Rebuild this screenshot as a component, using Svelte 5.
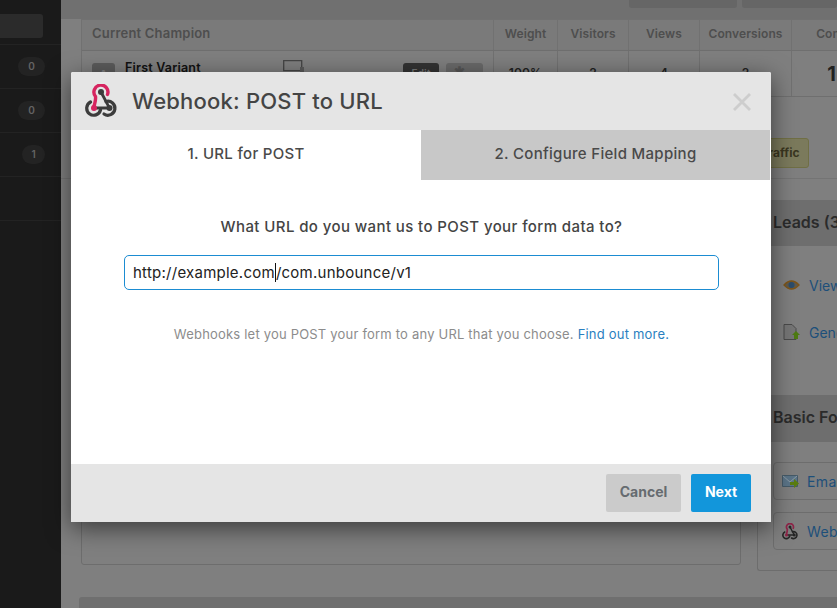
<script>
	const sideRows = [{ n: 0 }, { n: 0 }, { n: 1 }];
	const columns = [
		{ label: 'Weight', w: 64, value: '100%' },
		{ label: 'Visitors', w: 71, value: '2' },
		{ label: 'Views', w: 71, value: '4' },
		{ label: 'Conversions', w: 92, value: '2' },
		{ label: 'Conv', w: 80, value: '1', big: true }
	];
</script>

{#snippet hookIcon(size, pink, dark)}
	<svg width={size} height={size} viewBox="0 0 34 34">
		<path d="M22.500 10.500A7 7 0 1 0 10.500 12.500Q11 16 8.500 24" fill="none" stroke={pink} stroke-width="3.400" stroke-linecap="round" />
		<path d="M16 8L24.500 24H9" fill="none" stroke={dark} stroke-width="2.800" />
		<path d="M21 17.500A7 7 0 1 1 19 30" fill="none" stroke={dark} stroke-width="3.200" stroke-linecap="round" />
		<path d="M5.500 18A7 7 0 1 0 15.500 26" fill="none" stroke={dark} stroke-width="3.200" stroke-linecap="round" />
		<circle cx="16" cy="8" r="3" fill={dark} />
		<circle cx="24.500" cy="24" r="3" fill={dark} />
		<circle cx="9" cy="24" r="3" fill={pink} />
	</svg>
{/snippet}

<div class="page">
	<aside class="sidebar">
		<div class="side-top"><span class="side-btn"></span></div>
		{#each sideRows as row}
			<div class="side-row"><span class="pill" class:narrow={row.n === 1}>{row.n}</span></div>
		{/each}
		<div class="side-row"></div>
	</aside>

	<main class="main">
		<div class="topbar">
			<span class="top-btn one"></span>
			<span class="top-btn two"></span>
		</div>

		<div class="table">
			<div class="tr head">
				<div class="cell name">Current Champion</div>
				{#each columns as col}
					<div class="cell num" style="width:{col.w}px">{col.label}</div>
				{/each}
			</div>
			<div class="tr body">
				<div class="cell name variant">
					<span class="letter">A</span>
					<b>First Variant</b>
					<svg class="screen" width="21" height="13" viewBox="0 0 21 13"><path d="M.7.700h18v10H.7z" fill="none" stroke="#454545" stroke-width="1.300" /><path d="M17 7h4v6h-4z" fill="#5a5a5a" /></svg>
					<span class="edit">Edit</span>
					<span class="gear">✱</span>
				</div>
				{#each columns as col}
					<div class="cell num value" class:big={col.big} style="width:{col.w}px">{col.value}</div>
				{/each}
			</div>
		</div>

		<div class="traffic-row"><span class="traffic">Traffic</span></div>

		<div class="columns">
			<div class="left-panel"></div>
			<div class="right-panel">
				<h3>Leads (3)</h3>
				<div class="link-row">
					<svg width="17" height="12" viewBox="0 0 17 12"><path d="M1 6q7.500-8 15 0q-7.500 8-15 0z" fill="#5f5a4d" stroke="#7e5518" stroke-width="1.300" /><circle cx="8.500" cy="6" r="3" fill="#2c4d6b" /></svg>
					<a>View Leads</a>
				</div>
				<div class="link-row second">
					<svg width="17" height="16" viewBox="0 0 17 16"><path d="M1 .5h8l4 4v11H1z" fill="#757575" stroke="#4a4a4a" /><path d="M13 7l4 4h-2v4h-4v-4H9z" fill="#4d7a12" /></svg>
					<a>Generate</a>
				</div>
				<h3 class="basic">Basic Forms</h3>
				<div class="int-box">
					<svg width="17" height="15" viewBox="0 0 17 15"><path d="M.5 1.500h15v11H.5z" fill="#5b7487" stroke="#455a68" /><path d="M1 2l7 6 7-6" fill="none" stroke="#8a9aa5" /><path d="M8 8h4V5l5 4.500-5 4.500v-3H8z" fill="#5a7d10" /></svg>
					<a>Email</a>
				</div>
				<div class="int-box">
					{@render hookIcon(17, '#8f2448', '#262626')}
					<a>Webhook</a>
				</div>
			</div>
		</div>

		<div class="bottom-band"></div>
	</main>

	<div class="modal">
		<header class="modal-head">
			<span class="hook">{@render hookIcon(34, '#d6245f', '#3c3c3c')}</span>
			<h1>Webhook: POST to URL</h1>
			<svg class="close" width="20" height="20" viewBox="0 0 20 20"><path d="M2 2l16 16M18 2L2 18" stroke="#cdcdcd" stroke-width="2.800" /></svg>
		</header>

		<nav class="tabs">
			<div class="tab active">1. URL for POST</div>
			<div class="tab">2. Configure Field Mapping</div>
		</nav>

		<section class="modal-body">
			<p class="question">What URL do you want us to POST your form data to?</p>
			<div class="url-input" role="textbox">http://example.com<span class="caret"></span>/com.unbounce/v1</div>
			<p class="hint">Webhooks let you POST your form to any URL that you choose. <a>Find out more.</a></p>
		</section>

		<footer class="modal-foot">
			<button class="btn cancel">Cancel</button>
			<button class="btn next">Next</button>
		</footer>
	</div>
</div>

<style>
	:global(body) {
		margin: 0;
		background: #7f7f7f;
	}

	.page {
		position: relative;
		display: flex;
		width: 837px;
		height: 608px;
		overflow: hidden;
		font-family: Inter, 'Liberation Sans', sans-serif;
		color: #444;
	}

	.sidebar {
		flex: 0 0 61px;
		background: #1a1a1a;
	}

	.side-top {
		height: 45px;
		padding-top: 14px;
		box-sizing: border-box;
		border-bottom: 1px solid #232323;
	}

	.side-btn {
		display: block;
		width: 43px;
		height: 24px;
		background: #2b2b2b;
		border-radius: 0 3px 3px 0;
	}

	.side-row {
		display: flex;
		align-items: center;
		justify-content: flex-end;
		height: 43px;
		padding-right: 16px;
		border-bottom: 1px solid #232323;
	}

	.pill {
		width: 27px;
		height: 19px;
		line-height: 19px;
		border-radius: 10px;
		background: #232323;
		color: #646464;
		font-size: 10px;
		font-weight: 600;
		text-align: center;
	}

	.pill.narrow {
		width: 23px;
	}

	.main {
		flex: 1;
		min-width: 0;
		background: #7f7f7f;
	}

	.topbar {
		display: flex;
		justify-content: flex-end;
		gap: 5px;
		height: 19px;
		background: #707070;
	}

	.top-btn {
		height: 8px;
		background: #666;
		border-radius: 0 0 3px 3px;
	}

	.top-btn.one {
		width: 108px;
	}

	.top-btn.two {
		width: 95px;
	}

	.table {
		width: 800px;
		margin-left: 20px;
		border-left: 1px solid #717171;
	}

	.tr {
		display: flex;
		border-bottom: 1px solid #6f6f6f;
	}

	.head {
		height: 30px;
		background: #7a7a7a;
		border-top: 1px solid #717171;
	}

	.body {
		height: 45px;
	}

	.cell {
		display: flex;
		align-items: center;
		box-sizing: border-box;
		padding-bottom: 4px;
		font-size: 12px;
		letter-spacing: 0.1px;
		font-weight: 600;
		color: #4e4e4e;
	}

	.name {
		width: 411px;
		padding-left: 10px;
		font-size: 13px;
		letter-spacing: 0.2px;
	}

	.variant {
		align-items: flex-start;
		padding-top: 9px;
		color: #111;
	}

	.letter {
		width: 23px;
		height: 23px;
		margin: 3px 10px 0 0;
		background: #5c5c5c;
		border-radius: 3px;
		color: #7f7f7f;
		text-align: center;
		line-height: 24px;
	}

	.variant b {
		width: 158px;
		font-size: 12.500px;
		font-weight: 600;
	}

	.screen {
		margin-right: 99px;
	}

	.edit {
		width: 36px;
		height: 20px;
		margin: 3px 7px 0 0;
		line-height: 20px;
		background: #333;
		border-radius: 3px;
		color: #777;
		text-align: center;
		font-size: 10px;
	}

	.gear {
		width: 37px;
		height: 20px;
		margin-top: 3px;
		background: #6a6a6a;
		border-radius: 3px;
		color: #555;
		padding-left: 8px;
		box-sizing: border-box;
	}

	.num {
		justify-content: center;
		border-left: 1px solid #717171;
	}

	.value {
		align-items: flex-start;
		padding-top: 14px;
		color: #222;
		font-size: 12px;
	}

	.value.big {
		padding-top: 11px;
		font-size: 20px;
		font-weight: 700;
	}

	.traffic-row {
		display: flex;
		height: 82px;
		padding: 41px 0 0 680px;
		box-sizing: border-box;
		border-bottom: 1px solid #747474;
	}

	.traffic {
		width: 68px;
		height: 30px;
		line-height: 28px;
		box-sizing: border-box;
		padding-left: 19px;
		background: #7b7a5c;
		border: 1px solid #706f45;
		border-radius: 3px;
		color: #3a3620;
		font-size: 12px;
		font-weight: 700;
	}

	.columns {
		display: flex;
		gap: 16px;
		margin-left: 20px;
		margin-top: 17px;
	}

	.left-panel {
		flex: 0 0 660px;
		box-sizing: border-box;
		height: 369px;
		border: 1px solid #6d6d6d;
		border-radius: 3px;
	}

	.right-panel {
		flex: 0 0 200px;
		box-sizing: border-box;
		height: 375px;
		padding-top: 4px;
		border-left: 1px solid #6d6d6d;
		border-bottom: 1px solid #6d6d6d;
		border-radius: 0 0 0 3px;
	}

	h3 {
		margin: 0;
		height: 46px;
		padding-left: 15px;
		background: #6e6e6e;
		color: #2b2b2b;
		font-size: 16px;
		font-weight: 600;
		line-height: 44px;
	}

	h3.basic {
		margin-top: 53px;
		height: 47px;
	}

	.link-row {
		display: flex;
		align-items: center;
		gap: 9px;
		height: 20px;
		margin-top: 29px;
		padding-left: 25px;
		font-size: 14px;
	}

	.link-row.second {
		margin-top: 27px;
		margin-bottom: 30px;
	}

	a {
		color: #1d4f7a;
	}

	.int-box {
		display: flex;
		align-items: center;
		gap: 8px;
		box-sizing: border-box;
		height: 38px;
		margin: 20px 0 -8px 15px;
		padding-left: 8px;
		border: 1px solid #6d6d6d;
		border-radius: 4px;
		font-size: 14px;
		letter-spacing: 0.4px;
	}

	.bottom-band {
		margin: 26px 0 0 18px;
		height: 30px;
		background: #6f6f6f;
		border-radius: 3px 0 0 0;
	}

	.modal {
		position: absolute;
		left: 71px;
		top: 72px;
		display: flex;
		flex-direction: column;
		width: 700px;
		height: 450px;
		background: #fff;
		border-radius: 2px;
		box-shadow: 0 6px 24px rgba(0, 0, 0, 0.55);
	}

	.modal-head {
		display: flex;
		align-items: center;
		height: 58px;
		padding: 0 19px 0 14px;
		background: #e5e5e5;
		border-radius: 2px 2px 0 0;
	}

	.hook {
		display: flex;
		margin-right: 13px;
	}

	h1 {
		flex: 1;
		margin: 0;
		color: #444;
		font-size: 22px;
		font-weight: 500;
		letter-spacing: 0.2px;
	}

	.close {
		margin-top: 2px;
	}

	.tabs {
		display: flex;
		height: 50px;
		padding-right: 1px;
	}

	.tab {
		flex: 1;
		display: flex;
		align-items: center;
		justify-content: center;
		padding-bottom: 3px;
		box-sizing: border-box;
		background: #c8c8c8;
		color: #4a4a4a;
		font-size: 15px;
		font-weight: 500;
		letter-spacing: 0.3px;
	}

	.tab.active {
		flex: 0 0 350px;
		background: #fff;
	}

	.modal-body {
		flex: 1;
		padding: 38px 52px 0 53px;
		text-align: center;
	}

	.question {
		margin: 0;
		color: #444;
		font-size: 15px;
		font-weight: 500;
		line-height: 18px;
		letter-spacing: 0.4px;
	}

	.url-input {
		display: flex;
		align-items: center;
		box-sizing: border-box;
		height: 35px;
		margin-top: 19px;
		padding-left: 8px;
		border: 1px solid #1b8cd2;
		border-radius: 5px;
		color: #222;
		font-size: 15px;
		letter-spacing: 0.25px;
	}

	.caret {
		width: 1px;
		height: 19px;
		background: #111;
	}

	.hint {
		margin: 36px 0 0;
		color: #8c8c8c;
		font-size: 13px;
		line-height: 16px;
		letter-spacing: 0.2px;
	}

	.hint a {
		color: #2a7fc0;
	}

	.modal-foot {
		display: flex;
		justify-content: flex-end;
		gap: 10px;
		height: 58px;
		padding: 10px 20px;
		box-sizing: border-box;
		background: #e5e5e5;
	}

	.btn {
		height: 38px;
		padding: 0 0 3px;
		border: 0;
		border-radius: 2px;
		font-family: inherit;
		font-size: 14px;
		font-weight: 700;
	}

	.cancel {
		width: 75px;
		background: #cbcbcb;
		color: #666b70;
	}

	.next {
		width: 60px;
		background: #1296db;
		color: #fff;
	}
</style>
